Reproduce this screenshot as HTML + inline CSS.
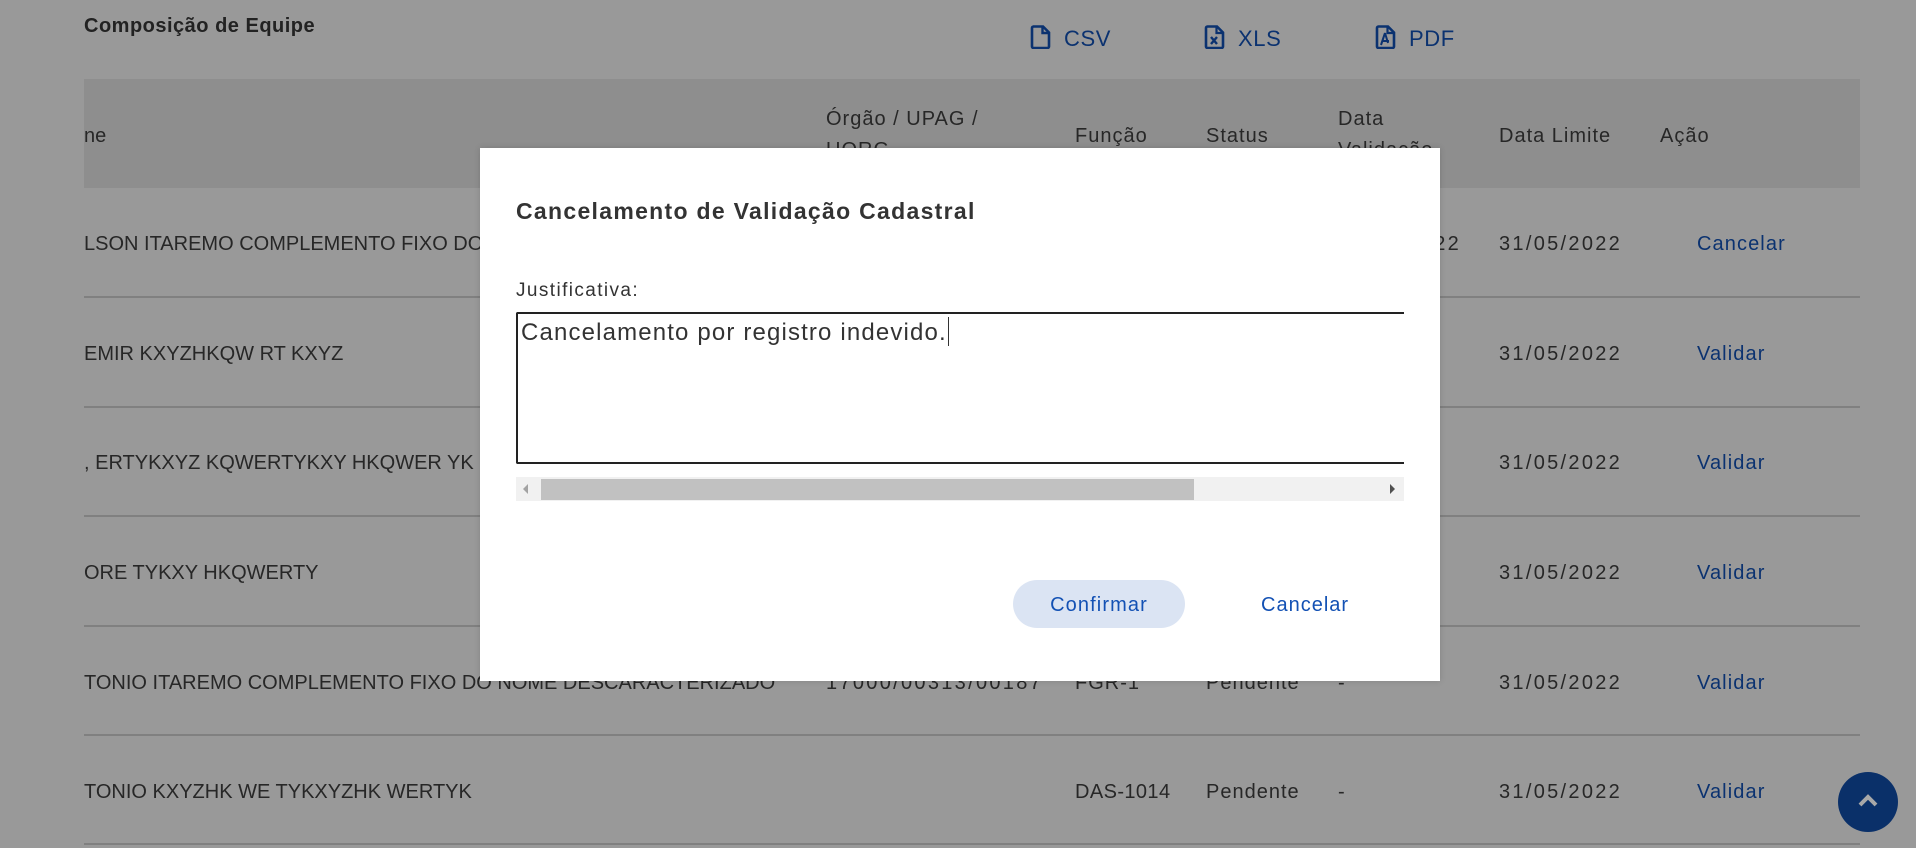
<!DOCTYPE html>
<html><head><meta charset="utf-8"><style>
*{margin:0;padding:0;box-sizing:border-box}
body{width:1916px;height:848px;overflow:hidden;background:#999;font-family:"Liberation Sans",sans-serif;position:relative;color:#262626}
.a{position:absolute;white-space:nowrap}
.t{font-size:20px;color:#272727;line-height:24px}
.l{font-size:20px;color:#0b3270;line-height:24px;letter-spacing:1.1px}
.s{letter-spacing:1px}
.d{letter-spacing:2.3px}
.line{position:absolute;left:84px;width:1776px;height:2px;background:#808080}
.ex{font-size:22px;color:#0b3270;line-height:26px;letter-spacing:0.6px}
</style></head><body>
<div class="a" style="left:84px;top:15px;font-size:20px;font-weight:bold;color:#222;letter-spacing:0.5px">Composição de Equipe</div>

<svg class="a" style="left:1030px;top:25px" width="22" height="24" viewBox="0 0 22 24"><path d="M3 1.5h10l6 6v14a1.5 1.5 0 0 1-1.5 1.5h-14A1.5 1.5 0 0 1 2 21.5V3A1.5 1.5 0 0 1 3.5 1.5Z" fill="none" stroke="#0b3270" stroke-width="2.6"/><path d="M12.5 1.5v6.5h6.5" fill="none" stroke="#0b3270" stroke-width="2.4"/></svg>
<div class="a ex" style="left:1064px;top:26px">CSV</div>
<svg class="a" style="left:1204px;top:25px" width="22" height="24" viewBox="0 0 22 24"><path d="M3.5 1.5h9.5l6 6v14a1.5 1.5 0 0 1-1.5 1.5h-14A1.5 1.5 0 0 1 2 21.5V3A1.5 1.5 0 0 1 3.5 1.5Z" fill="none" stroke="#0b3270" stroke-width="2.6"/><path d="M12.5 1.5v6.5h6.5" fill="none" stroke="#0b3270" stroke-width="2.2"/><path d="M7 12l6 7M13 12l-6 7" stroke="#0b3270" stroke-width="2.4"/></svg>
<div class="a ex" style="left:1238px;top:26px">XLS</div>
<svg class="a" style="left:1375px;top:25px" width="22" height="24" viewBox="0 0 22 24"><path d="M3.5 1.5h9.5l6 6v14a1.5 1.5 0 0 1-1.5 1.5h-14A1.5 1.5 0 0 1 2 21.5V3A1.5 1.5 0 0 1 3.5 1.5Z" fill="none" stroke="#0b3270" stroke-width="2.6"/><path d="M12.5 1.5v6.5h6.5" fill="none" stroke="#0b3270" stroke-width="2.2"/><path d="M10 8l-4 12M10 8l3 10M7 16h7" fill="none" stroke="#0b3270" stroke-width="2"/></svg>
<div class="a ex" style="left:1409px;top:26px">PDF</div>

<div class="a" style="left:84px;top:79px;width:1776px;height:109px;background:#8e8e8e"></div>
<div class="a t" style="left:84px;top:124px">ne</div>
<div class="a t s" style="left:826px;top:107px">Órgão / UPAG /</div>
<div class="a t s" style="left:826px;top:138px">UORG</div>
<div class="a t s" style="left:1075px;top:124px">Função</div>
<div class="a t s" style="left:1206px;top:124px">Status</div>
<div class="a t s" style="left:1338px;top:107px">Data</div>
<div class="a t s" style="left:1338px;top:138px">Validação</div>
<div class="a t s" style="left:1499px;top:124px">Data Limite</div>
<div class="a t s" style="left:1660px;top:124px">Ação</div>

<div class="line" style="top:296px"></div>
<div class="line" style="top:406px"></div>
<div class="line" style="top:515px"></div>
<div class="line" style="top:625px"></div>
<div class="line" style="top:734px"></div>
<div class="line" style="top:843px"></div>

<div class="a t" style="left:84px;top:232px">LSON ITAREMO COMPLEMENTO FIXO DO NOME DESCARACTERIZADO</div>
<div class="a t d" style="left:1338px;top:232px">31/05/2022</div>
<div class="a t d" style="left:1499px;top:232px">31/05/2022</div>
<div class="a l" style="left:1697px;top:232px">Cancelar</div>

<div class="a t" style="left:84px;top:342px">EMIR KXYZHKQW RT KXYZ</div>
<div class="a t d" style="left:1499px;top:342px">31/05/2022</div>
<div class="a l" style="left:1697px;top:342px">Validar</div>

<div class="a t" style="left:84px;top:451px">, ERTYKXYZ KQWERTYKXY HKQWER YK</div>
<div class="a t d" style="left:1499px;top:451px">31/05/2022</div>
<div class="a l" style="left:1697px;top:451px">Validar</div>

<div class="a t" style="left:84px;top:561px">ORE TYKXY HKQWERTY</div>
<div class="a t d" style="left:1499px;top:561px">31/05/2022</div>
<div class="a l" style="left:1697px;top:561px">Validar</div>

<div class="a t" style="left:84px;top:671px">TONIO ITAREMO COMPLEMENTO FIXO DO NOME DESCARACTERIZADO</div>
<div class="a t d" style="left:826px;top:671px">17000/00313/00187</div>
<div class="a t s" style="left:1075px;top:671px">FGR-1</div>
<div class="a t s" style="left:1206px;top:671px">Pendente</div>
<div class="a t" style="left:1338px;top:671px">-</div>
<div class="a t d" style="left:1499px;top:671px">31/05/2022</div>
<div class="a l" style="left:1697px;top:671px">Validar</div>

<div class="a t" style="left:84px;top:780px">TONIO KXYZHK WE TYKXYZHK WERTYK</div>
<div class="a t" style="left:1075px;top:780px;letter-spacing:0.4px">DAS-1014</div>
<div class="a t s" style="left:1206px;top:780px">Pendente</div>
<div class="a t" style="left:1338px;top:780px">-</div>
<div class="a t d" style="left:1499px;top:780px">31/05/2022</div>
<div class="a l" style="left:1697px;top:780px">Validar</div>

<div class="a" style="left:1838px;top:772px;width:60px;height:60px;border-radius:50%;background:#0a3069"></div>
<svg class="a" style="left:1854px;top:790px" width="28" height="20" viewBox="0 0 28 20"><path d="M6 15l8-8 8 8" fill="none" stroke="#a8a8a8" stroke-width="4"/></svg>

<div class="a" style="left:480px;top:148px;width:960px;height:533px;background:#fff;box-shadow:0 0 6px rgba(0,0,0,.15)">
  <div class="a" style="left:36px;top:49px;font-size:23px;font-weight:bold;color:#333;line-height:28px;letter-spacing:1.3px">Cancelamento de Validação Cadastral</div>
  <div class="a" style="left:36px;top:131px;font-size:19px;color:#333;line-height:24px;letter-spacing:1.4px">Justificativa:</div>
  <div class="a" style="left:36px;top:164px;width:888px;height:152px;border:2px solid #222;border-right:none;border-radius:2px 0 0 2px"></div>
  <div class="a" style="left:41px;top:169px;font-size:24px;color:#333;line-height:30px;letter-spacing:1.15px">Cancelamento por registro indevido.<span style="display:inline-block;width:1px;height:29px;background:#333;vertical-align:-6px;margin-left:1px"></span></div>
  <div class="a" style="left:36px;top:329px;width:888px;height:24px;background:#f1f1f1"></div>
  <div class="a" style="left:61px;top:331px;width:653px;height:21px;background:#c1c1c1"></div>
  <svg class="a" style="left:42px;top:335px" width="8" height="12"><path d="M6 1L1 6l5 5z" fill="#a3a3a3"/></svg>
  <svg class="a" style="left:908px;top:335px" width="8" height="12"><path d="M2 1l5 5-5 5z" fill="#505050"/></svg>
  <div class="a" style="left:533px;top:432px;width:172px;height:48px;border-radius:24px;background:#dbe4f3;color:#1351b4;font-size:20px;line-height:50px;text-align:center;letter-spacing:1.1px">Confirmar</div>
  <div class="a" style="left:781px;top:433px;font-size:20px;line-height:48px;color:#1351b4;letter-spacing:1px">Cancelar</div>
</div>
</body></html>
